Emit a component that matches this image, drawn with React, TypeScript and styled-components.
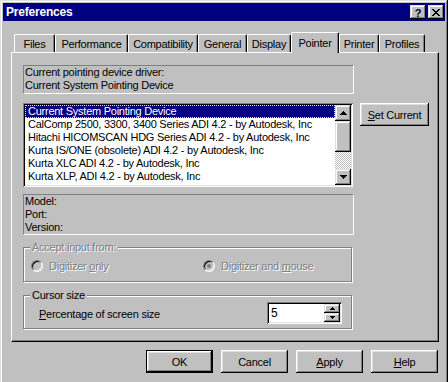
import React from 'react'
import styled, { createGlobalStyle, css } from 'styled-components'

const GlobalStyle = createGlobalStyle`
	html, body {
		margin: 0;
		padding: 0;
		overflow: hidden;
		background: #c0c0c0;
	}
	body {
		font-family: "Liberation Sans", Arial, sans-serif;
		font-size: 11px;
		letter-spacing: -0.25px;
		color: #000;
	}
`

// win95 bevels
const raised = css`
	box-shadow: inset -1px -1px #000, inset 1px 1px #fff, inset -2px -2px #808080, inset 2px 2px #dfdfdf;
`
const raisedSmall = css`
	box-shadow: inset -1px -1px #000, inset 1px 1px #dfdfdf, inset -2px -2px #808080, inset 2px 2px #fff;
`
const sunken = css`
	box-shadow: inset 1px 1px #808080, inset -1px -1px #fff, inset 2px 2px #000, inset -2px -2px #dfdfdf;
`
const staticEdge = css`
	border: 1px solid;
	border-color: #808080 #fff #fff #808080;
`
const disabledText = css`
	color: #808080;
	text-shadow: 1px 1px #fff;
`

const Window = styled.div`
	box-sizing: border-box;
	width: 448px;
	height: 392px;
	padding: 3px;
	background: #c0c0c0;
	box-shadow: inset -1px -1px #000, inset 1px 1px #dfdfdf, inset -2px -2px #808080, inset 2px 2px #fff;
	display: flex;
	flex-direction: column;
`

const TitleBar = styled.div`
	height: 18px;
	background: #000080;
	display: flex;
	align-items: center;
	padding: 0 1px 0 3px;
	color: #fff;
	font-weight: bold;
	font-size: 12px;
	letter-spacing: -0.2px;
`

const TitleText = styled.div`
	flex: 1;
`

const CaptionButton = styled.div<{ $gap?: number }>`
	box-sizing: border-box;
	width: 16px;
	height: 14px;
	margin-left: ${(p) => p.$gap || 0}px;
	background: #c0c0c0;
	color: #000;
	display: flex;
	align-items: center;
	justify-content: center;
	font-size: 11px;
	line-height: 14px;
	padding-top: 1px;
	${raisedSmall}
`

const Content = styled.div`
	padding: 11px 6px 0 8px;
	display: flex;
	flex-direction: column;
`

const TabStrip = styled.div`
	display: flex;
	align-items: flex-end;
	height: 21px;
	padding-left: 3px;
	margin-bottom: -1px;
	position: relative;
	z-index: 1;
`

const Tab = styled.div<{ $width: number; $active?: boolean }>`
	box-sizing: border-box;
	width: ${(p) => p.$width}px;
	height: ${(p) => (p.$active ? 21 : 18)}px;
	margin-bottom: ${(p) => (p.$active ? 0 : 1)}px;
	display: flex;
	align-items: center;
	justify-content: center;
	background: #c0c0c0;
	border-top: 1px solid #fff;
	border-left: 1px solid #fff;
	border-right: 1px solid #000;
	border-radius: 2px 2px 0 0;
	box-shadow: inset -1px 0 #808080;
`

const Panel = styled.div`
	box-sizing: border-box;
	height: 290px;
	border: 1px solid;
	border-color: #fff #000 #000 #fff;
	box-shadow: inset -1px -1px #808080;
	padding: 12px 0 0 11px;
	display: flex;
	flex-direction: column;
	align-items: flex-start;
`

const InfoBox = styled.div<{ $height: number }>`
	box-sizing: border-box;
	width: 331px;
	height: ${(p) => p.$height}px;
	${staticEdge}
	padding: 0 0 0 1px;
	line-height: 13px;
`

const ListRow = styled.div`
	display: flex;
	align-items: flex-start;
	margin-top: 9px;
	margin-bottom: 7px;
`

const ListBox = styled.div`
	box-sizing: border-box;
	width: 330px;
	height: 84px;
	padding: 2px;
	background: #fff;
	display: flex;
	${sunken}
`

const ListItems = styled.div`
	flex: 1;
	overflow: hidden;
`

const ListItem = styled.div<{ $selected?: boolean }>`
	height: 13px;
	line-height: 13px;
	padding-left: 3px;
	white-space: nowrap;
	background: ${(p) => (p.$selected ? '#000080' : 'transparent')};
	color: ${(p) => (p.$selected ? '#fff' : '#000')};
	${(p) =>
		p.$selected &&
		css`
			outline: 1px dotted #ffff00;
			outline-offset: -1px;
		`}
`

const ScrollBar = styled.div`
	width: 16px;
	display: flex;
	flex-direction: column;
`

const ScrollButton = styled.div<{ $height: number }>`
	box-sizing: border-box;
	height: ${(p) => p.$height}px;
	background: #c0c0c0;
	display: flex;
	align-items: center;
	justify-content: center;
	${raisedSmall}
`

const ScrollTrack = styled.div`
	flex: 1;
	background: repeating-conic-gradient(#c0c0c0 0 25%, #fff 0 50%) 0 0 / 2px 2px;
`

const PushButton = styled.div<{ $width: number; $default?: boolean }>`
	box-sizing: border-box;
	width: ${(p) => p.$width}px;
	height: 23px;
	background: #c0c0c0;
	display: flex;
	align-items: center;
	justify-content: center;
	${(p) =>
		p.$default
			? css`
					border: 1px solid #000;
					${raised}
				`
			: raised}
`

const SideButton = styled(PushButton)`
	margin-left: 7px;
`

const GroupBox = styled.div<{ $height: number; $top: number }>`
	position: relative;
	box-sizing: border-box;
	width: 329px;
	height: ${(p) => p.$height}px;
	margin-top: ${(p) => p.$top}px;
	border: 1px solid #808080;
	box-shadow: inset 1px 1px #fff, 1px 1px #fff;
`

const GroupLabel = styled.span<{ $disabled?: boolean }>`
	position: absolute;
	top: -7px;
	left: 6px;
	padding: 0 2px;
	line-height: 13px;
	background: #c0c0c0;
	${(p) => p.$disabled && disabledText}
`

const RadioRow = styled.div`
	display: flex;
	padding: 11px 0 0 7px;
`

const RadioOption = styled.div<{ $width?: number }>`
	display: flex;
	align-items: center;
	gap: 6px;
	width: ${(p) => (p.$width ? `${p.$width}px` : 'auto')};
	height: 13px;
	${disabledText}
`

const Radio = styled.span<{ $checked?: boolean }>`
	box-sizing: border-box;
	width: 12px;
	height: 12px;
	border-radius: 50%;
	border: 1px solid;
	border-color: #808080 #fff #fff #808080;
	background: #c0c0c0;
	box-shadow: inset 1px 1px #000, inset -1px -1px #dfdfdf;
	display: flex;
	align-items: center;
	justify-content: center;
	text-shadow: none;

	&::after {
		content: '';
		width: 4px;
		height: 4px;
		border-radius: 50%;
		background: ${(p) => (p.$checked ? '#808080' : 'transparent')};
	}
`

const SizeRow = styled.div`
	display: flex;
	align-items: center;
	justify-content: space-between;
	padding: 6px 9px 0 15px;
`

const SizeLabel = styled.span`
	padding-top: 2px;
	line-height: 13px;
`

const SpinBox = styled.div`
	box-sizing: border-box;
	width: 75px;
	height: 22px;
	padding: 2px;
	background: #fff;
	display: flex;
	${sunken}
`

const SpinValue = styled.div`
	flex: 1;
	padding: 1px 0 0 2px;
	font-size: 12px;
	line-height: 16px;
`

const SpinButtons = styled.div`
	width: 16px;
	display: flex;
	flex-direction: column;
`

const SpinButton = styled.div`
	box-sizing: border-box;
	height: 9px;
	background: #c0c0c0;
	display: flex;
	align-items: center;
	justify-content: center;
	${raisedSmall}
`

const ButtonRow = styled.div`
	display: flex;
	justify-content: flex-end;
	gap: 8px;
	margin-top: 8px;
	padding-right: 1px;
`

const ArrowUp = ({ size = 7 }: { size?: number }) =>
	size === 7 ? (
		<svg width="7" height="4" viewBox="0 0 7 4" shapeRendering="crispEdges">
			<path d="M3 0h1v1h1v1h1v1h1v1H0V3h1V2h1V1h1z" fill="#000" />
		</svg>
	) : (
		<svg width="5" height="3" viewBox="0 0 5 3" shapeRendering="crispEdges">
			<path d="M2 0h1v1h1v1h1v1H0V2h1V1h1z" fill="#000" />
		</svg>
	)

const ArrowDown = ({ size = 7 }: { size?: number }) =>
	size === 7 ? (
		<svg width="7" height="4" viewBox="0 0 7 4" shapeRendering="crispEdges">
			<path d="M0 0h7v1H6v1H5v1H4v1H3V3H2V2H1V1H0z" fill="#000" />
		</svg>
	) : (
		<svg width="5" height="3" viewBox="0 0 5 3" shapeRendering="crispEdges">
			<path d="M0 0h5v1H4v1H3v1H2V2H1V1H0z" fill="#000" />
		</svg>
	)

const CloseGlyph = () => (
	<svg width="8" height="7" viewBox="0 0 8 7" shapeRendering="crispEdges">
		<path
			d="M0 0h2v1H0zM6 0h2v1H6zM1 1h2v1H1zM5 1h2v1H5zM2 2h4v1H2zM3 3h2v1H3zM2 4h4v1H2zM1 5h2v1H1zM5 5h2v1H5zM0 6h2v1H0zM6 6h2v1H6z"
			fill="#000"
		/>
	</svg>
)

const tabs = [
	{ label: 'Files', width: 41 },
	{ label: 'Performance', width: 73 },
	{ label: 'Compatibility', width: 70 },
	{ label: 'General', width: 49 },
	{ label: 'Display', width: 44 },
	{ label: 'Pointer', width: 48, active: true },
	{ label: 'Printer', width: 40 },
	{ label: 'Profiles', width: 46 },
]

const devices = [
	'Current System Pointing Device',
	'CalComp 2500, 3300, 3400 Series ADI 4.2 - by Autodesk, Inc',
	'Hitachi HICOMSCAN HDG Series ADI 4.2 - by Autodesk, Inc',
	'Kurta IS/ONE (obsolete) ADI 4.2 - by Autodesk, Inc',
	'Kurta XLC ADI 4.2 - by Autodesk, Inc',
	'Kurta XLP, ADI 4.2 - by Autodesk, Inc',
]

export default function App() {
	return (
		<>
			<GlobalStyle />
			<Window>
				<TitleBar>
					<TitleText>Preferences</TitleText>
					<CaptionButton>?</CaptionButton>
					<CaptionButton $gap={2}>
						<CloseGlyph />
					</CaptionButton>
				</TitleBar>
				<Content>
					<TabStrip>
						{tabs.map((t) => (
							<Tab key={t.label} $width={t.width} $active={t.active}>
								{t.label}
							</Tab>
						))}
					</TabStrip>
					<Panel>
						<InfoBox $height={29}>
							Current pointing device driver:
							<br />
							Current System Pointing Device
						</InfoBox>
						<ListRow>
							<ListBox>
								<ListItems>
									{devices.map((d, i) => (
										<ListItem key={d} $selected={i === 0}>
											{d}
										</ListItem>
									))}
								</ListItems>
								<ScrollBar>
									<ScrollButton $height={16}>
										<ArrowUp />
									</ScrollButton>
									<ScrollButton $height={31} />
									<ScrollTrack />
									<ScrollButton $height={16}>
										<ArrowDown />
									</ScrollButton>
								</ScrollBar>
							</ListBox>
							<SideButton $width={69}>
								<span>
									<u>S</u>et Current
								</span>
							</SideButton>
						</ListRow>
						<InfoBox $height={41}>
							Model:
							<br />
							Port:
							<br />
							Version:
						</InfoBox>
						<GroupBox $height={35} $top={12}>
							<GroupLabel $disabled>Accept input from:</GroupLabel>
							<RadioRow>
								<RadioOption $width={172}>
									<Radio />
									<span>
										Digitizer <u>o</u>nly
									</span>
								</RadioOption>
								<RadioOption>
									<Radio $checked />
									<span>
										Digitizer and <u>m</u>ouse
									</span>
								</RadioOption>
							</RadioRow>
						</GroupBox>
						<GroupBox $height={34} $top={13}>
							<GroupLabel>Cursor size</GroupLabel>
							<SizeRow>
								<SizeLabel>
									<u>P</u>ercentage of screen size
								</SizeLabel>
								<SpinBox>
									<SpinValue>5</SpinValue>
									<SpinButtons>
										<SpinButton>
											<ArrowUp size={5} />
										</SpinButton>
										<SpinButton>
											<ArrowDown size={5} />
										</SpinButton>
									</SpinButtons>
								</SpinBox>
							</SizeRow>
						</GroupBox>
					</Panel>
					<ButtonRow>
						<PushButton $width={67} $default>
							OK
						</PushButton>
						<PushButton $width={67}>Cancel</PushButton>
						<PushButton $width={67}>
							<span>
								<u>A</u>pply
							</span>
						</PushButton>
						<PushButton $width={67}>
							<span>
								<u>H</u>elp
							</span>
						</PushButton>
					</ButtonRow>
				</Content>
			</Window>
		</>
	)
}
